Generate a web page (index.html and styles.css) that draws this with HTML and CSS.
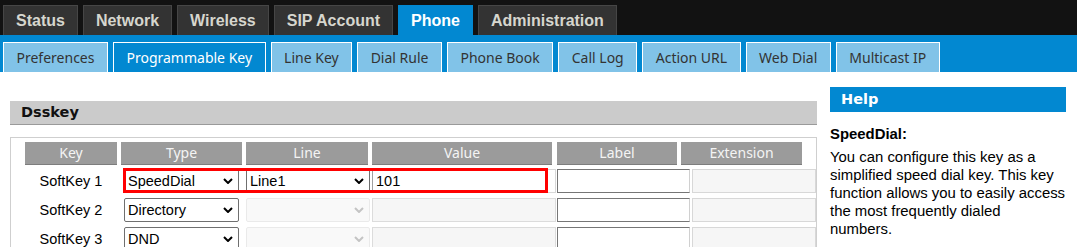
FILE: index.html
```html
<!DOCTYPE html>
<html lang="en">
<head>
  <meta charset="UTF-8">
  <title>Phone - Programmable Key</title>
  <link rel="stylesheet" href="styles.css">
</head>
<body>

<div class="topnav">
  <a class="tab">Status</a>
  <a class="tab">Network</a>
  <a class="tab">Wireless</a>
  <a class="tab">SIP Account</a>
  <a class="tab active">Phone</a>
  <a class="tab">Administration</a>
</div>

<div class="subnav">
  <a class="subtab">Preferences</a>
  <a class="subtab active">Programmable Key</a>
  <a class="subtab">Line Key</a>
  <a class="subtab">Dial Rule</a>
  <a class="subtab">Phone Book</a>
  <a class="subtab">Call Log</a>
  <a class="subtab">Action URL</a>
  <a class="subtab">Web Dial</a>
  <a class="subtab">Multicast IP</a>
</div>

<div class="main">
  <div class="panel">
    <div class="panel-title">Dsskey</div>
    <div class="panel-body">
      <div class="thead">
        <div class="th w-key">Key</div>
        <div class="th w-type">Type</div>
        <div class="th w-line">Line</div>
        <div class="th w-value">Value</div>
        <div class="th w-label">Label</div>
        <div class="th w-ext">Extension</div>
      </div>

      <div class="row">
        <div class="key">SoftKey 1</div>
        <span class="sel sel-type">
          <select><option>SpeedDial</option></select>
          <svg viewBox="0 0 10 6"><path d="M1 1 L5 5 L9 1"/></svg>
        </span>
        <span class="sel sel-line">
          <select><option>Line1</option></select>
          <svg viewBox="0 0 10 6"><path d="M1 1 L5 5 L9 1"/></svg>
        </span>
        <input class="in-value" type="text" value="101">
        <input class="in-label" type="text">
        <input class="in-ext" type="text" disabled>
        <div class="mark"></div>
      </div>

      <div class="row">
        <div class="key">SoftKey 2</div>
        <span class="sel sel-type">
          <select><option>Directory</option></select>
          <svg viewBox="0 0 10 6"><path d="M1 1 L5 5 L9 1"/></svg>
        </span>
        <span class="sel sel-line off">
          <select disabled><option></option></select>
          <svg viewBox="0 0 10 6"><path d="M1 1 L5 5 L9 1"/></svg>
        </span>
        <input class="in-value" type="text" disabled>
        <input class="in-label" type="text">
        <input class="in-ext" type="text" disabled>
      </div>

      <div class="row">
        <div class="key">SoftKey 3</div>
        <span class="sel sel-type">
          <select><option>DND</option></select>
          <svg viewBox="0 0 10 6"><path d="M1 1 L5 5 L9 1"/></svg>
        </span>
        <span class="sel sel-line off">
          <select disabled><option></option></select>
          <svg viewBox="0 0 10 6"><path d="M1 1 L5 5 L9 1"/></svg>
        </span>
        <input class="in-value" type="text" disabled>
        <input class="in-label" type="text">
        <input class="in-ext" type="text" disabled>
      </div>
    </div>
  </div>

  <div class="help">
    <div class="help-title">Help</div>
    <div class="help-body">
      <b>SpeedDial:</b>
      <p>You can configure this key as a simplified speed dial key. This key function allows you to easily access the most frequently dialed numbers.</p>
    </div>
  </div>
</div>

</body>
</html>
```

FILE: styles.css
```css
body {
  margin: 0;
  font-family: 'Liberation Sans', Arial, sans-serif;
  background: #fff;
  color: #000;
}
a {
  text-decoration: none;
}

/* top menu */
.topnav {
  background: #121212;
  height: 35px;
  padding-left: 3px;
  display: flex;
  align-items: flex-end;
  gap: 5px;
}
.tab {
  height: 29px;
  line-height: 29px;
  padding: 0 12px;
  background: #333;
  border: 1px solid #464646;
  border-bottom: none;
  color: #d6d6ce;
  font-weight: bold;
  font-size: 16px;
}
.tab.active {
  background: #0288d1;
  border-color: #0288d1;
  color: #fff;
}

/* second menu */
.subnav {
  background: #0288d1;
  height: 30px;
  padding: 7px 0 0 3px;
  display: flex;
  gap: 5px;
}
.subtab {
  height: 29px;
  line-height: 29px;
  padding: 0 12.5px;
  border: 1px solid #fff;
  border-bottom: none;
  background: #81c3e8;
  color: #333;
  font-family: 'Noto Sans', sans-serif;
  font-size: 14px;
}
.subtab.active {
  background: #0288d1;
  color: #fff;
}

.main {
  display: flex;
  gap: 13px;
  padding: 15px 10px 0 10px;
}

/* Dsskey panel */
.panel {
  width: 807px;
  flex-shrink: 0;
  padding-top: 14px;
}
.panel-title {
  height: 23px;
  line-height: 23px;
  background: #cbcbcb;
  border-bottom: 1px solid #9a9a9a;
  padding-left: 11px;
  font-family: 'DejaVu Sans', sans-serif;
  font-weight: bold;
  font-size: 14.5px;
  color: #111;
}
.panel-body {
  margin-top: 12px;
  border: 1px solid #cfcfcf;
  padding: 4px 0 20px 14px;
}
.thead {
  display: flex;
  gap: 4px;
}
.th {
  flex-shrink: 0;
  height: 22px;
  line-height: 22px;
  background: #9b9b9b;
  border-bottom: 1px solid #7d7d7d;
  color: #f4f4f4;
  text-align: center;
  font-family: 'Noto Sans', sans-serif;
  font-size: 14px;
}
.w-key { width: 92px; }
.w-type { width: 121px; }
.w-line { width: 122px; }
.w-value { width: 180px; margin-right: 1px; }
.w-label { width: 120px; }
.w-ext { width: 121px; }

.row {
  position: relative;
  display: flex;
  align-items: center;
  height: 24px;
  margin-top: 4px;
  font-size: 14.5px;
}
.row + .row {
  margin-top: 5px;
}
.row > * {
  flex-shrink: 0;
}
.key {
  width: 92px;
  text-align: center;
}

.sel {
  position: relative;
  display: block;
  height: 24px;
}
.sel select {
  appearance: none;
  -webkit-appearance: none;
  width: 100%;
  height: 24px;
  margin: 0;
  padding: 0 0 0 3px;
  border: 1px solid #6f6f6f;
  border-radius: 2px;
  background: #fff;
  font: inherit;
  color: #000;
}
.sel svg {
  position: absolute;
  right: 6px;
  top: 9px;
  width: 10px;
  height: 6px;
  fill: none;
  stroke: #000;
  stroke-width: 2;
  pointer-events: none;
}
.sel-type {
  width: 115px;
  margin-left: 7px;
}
.sel-line {
  width: 124px;
  margin-left: 7px;
}
.sel.off select {
  background: #f7f7f7;
  border-color: #e2e2e2;
}
.sel.off svg {
  stroke: #c4c4c4;
}

input {
  box-sizing: border-box;
  height: 24px;
  margin: 0;
  padding: 0 3px;
  font: inherit;
  color: #000;
  background: #fff;
  outline: none;
}
.in-value {
  width: 184px;
  margin-left: 2px;
  border: 1px solid #d8d8d8;
  border-left-color: #a0a0a0;
}
.in-label {
  width: 133px;
  margin-left: 1px;
  border: 1px solid #767676;
  border-right-color: #d0d0d0;
}
.row > .in-ext {
  flex: 1 1 0;
  min-width: 0;
  margin-left: 2px;
  border: 1px solid #d8d8d8;
  background: #f6f6f6;
}
input:disabled {
  background: #f6f6f6;
  border-color: #dcdcdc;
}

/* red highlight drawn over the first row */
.mark {
  position: absolute;
  left: 98px;
  top: -1px;
  width: 425px;
  height: 25px;
  box-sizing: border-box;
  border: 3px solid #f00;
  pointer-events: none;
}

/* help column */
.help {
  width: 236px;
  flex-shrink: 0;
}
.help-title {
  height: 25px;
  line-height: 25px;
  background: #0288d1;
  color: #fff;
  padding-left: 11px;
  font-family: 'DejaVu Sans', sans-serif;
  font-weight: bold;
  font-size: 14.5px;
}
.help-body {
  padding-top: 13px;
  font-size: 14.9px;
  line-height: 18px;
}
.help-body b {
  display: block;
  margin-bottom: 5px;
}
.help-body p {
  margin: 0;
}
```
